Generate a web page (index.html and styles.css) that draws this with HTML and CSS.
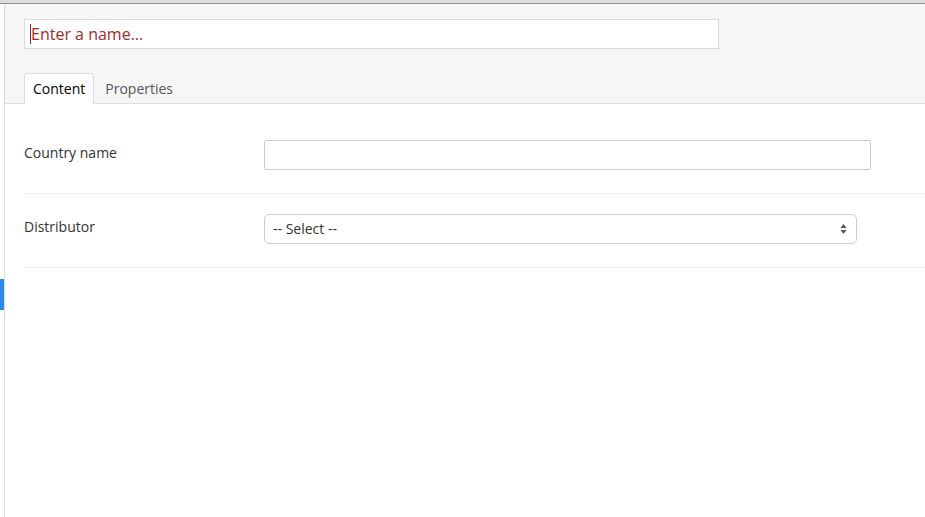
FILE: index.html
```html
<!DOCTYPE html>
<html lang="en">
<head>
    <meta charset="UTF-8">
    <title>Edit content</title>
    <link rel="stylesheet" href="styles.css">
</head>
<body>
    <div class="topbar"></div>
    <div class="main">
        <div class="rail">
            <div class="rail-marker"></div>
        </div>
        <div class="editor">
            <header class="editor-header">
                <div class="name-field">
                    <span class="caret"></span>
                    <input class="name-input" type="text" placeholder="Enter a name...">
                </div>
                <nav class="tabs">
                    <a class="tab active">Content</a>
                    <a class="tab">Properties</a>
                </nav>
            </header>
            <section class="form">
                <div class="form-row">
                    <label class="form-label">Country name</label>
                    <input class="text-input" type="text">
                </div>
                <div class="form-row">
                    <label class="form-label">Distributor</label>
                    <div class="select">
                        <span class="select-value">-- Select --</span>
                        <svg class="select-arrows" width="7" height="12" viewBox="0 0 7 12">
                            <path d="M3.5 1 L6.5 5 L0.5 5 Z" fill="#555"/>
                            <path d="M3.5 11 L6.5 7 L0.5 7 Z" fill="#555"/>
                        </svg>
                    </div>
                </div>
            </section>
        </div>
    </div>
</body>
</html>
```

FILE: styles.css
```css
body {
    margin: 0;
    font-family: "Open Sans", "Liberation Sans", sans-serif;
    font-size: 14px;
    color: #333;
    background-color: #fff;
    overflow: hidden;
}
.topbar {
    height: 3px;
    background-color: #dedede;
    border-bottom: 1px solid #8e8e8e;
}
.main {
    display: flex;
    height: 513px;
}
.rail {
    width: 4px;
    border-right: 1px solid #dcdcdc;
}
.rail-marker {
    margin-top: 275px;
    height: 31px;
    background-color: #2e8ae6;
}
.editor {
    flex: 1;
}
.editor-header {
    background-color: #f6f6f6;
    border-bottom: 1px solid #dddddd;
    padding: 15px 0 0 19px;
}
.name-field {
    position: relative;
    width: 695px;
}
.name-input {
    display: block;
    box-sizing: border-box;
    width: 695px;
    height: 30px;
    border: 1px solid #d9d9d9;
    background-color: #fff;
    padding: 0 6px;
    font-family: "Open Sans", "Liberation Sans", sans-serif;
    font-size: 16px;
    outline: none;
}
.name-input::placeholder {
    color: #a02b2b;
}
.caret {
    position: absolute;
    left: 6px;
    top: 5px;
    width: 1px;
    height: 20px;
    background-color: #9b1c1c;
}
.tabs {
    display: flex;
    gap: 2px;
    margin-top: 24px;
    margin-bottom: -1px;
}
.tab {
    height: 30px;
    line-height: 30px;
    padding: 0 8px;
    border: 1px solid transparent;
    border-bottom: none;
    border-radius: 4px 4px 0 0;
    color: #555;
}
.tab.active {
    background-color: #fff;
    border-color: #dddddd;
    color: #000;
}
.form {
    padding: 16px 0 0 19px;
}
.form-row {
    display: flex;
    padding: 20px 0 23px;
    border-bottom: 1px solid #f1f1f1;
}
.form-label {
    width: 240px;
    padding-top: 3px;
    line-height: 20px;
}
.text-input {
    box-sizing: border-box;
    width: 607px;
    height: 30px;
    border: 1px solid #cccccc;
    border-radius: 2px;
    margin: 0;
}
.select {
    box-sizing: border-box;
    width: 593px;
    height: 30px;
    border: 1px solid #cccccc;
    border-radius: 5px;
    display: flex;
    align-items: center;
    justify-content: space-between;
    padding: 0 8px;
    color: #333;
}
.select-value {
    margin-top: -1px;
}
.select-arrows {
    margin-right: 1px;
}
```
